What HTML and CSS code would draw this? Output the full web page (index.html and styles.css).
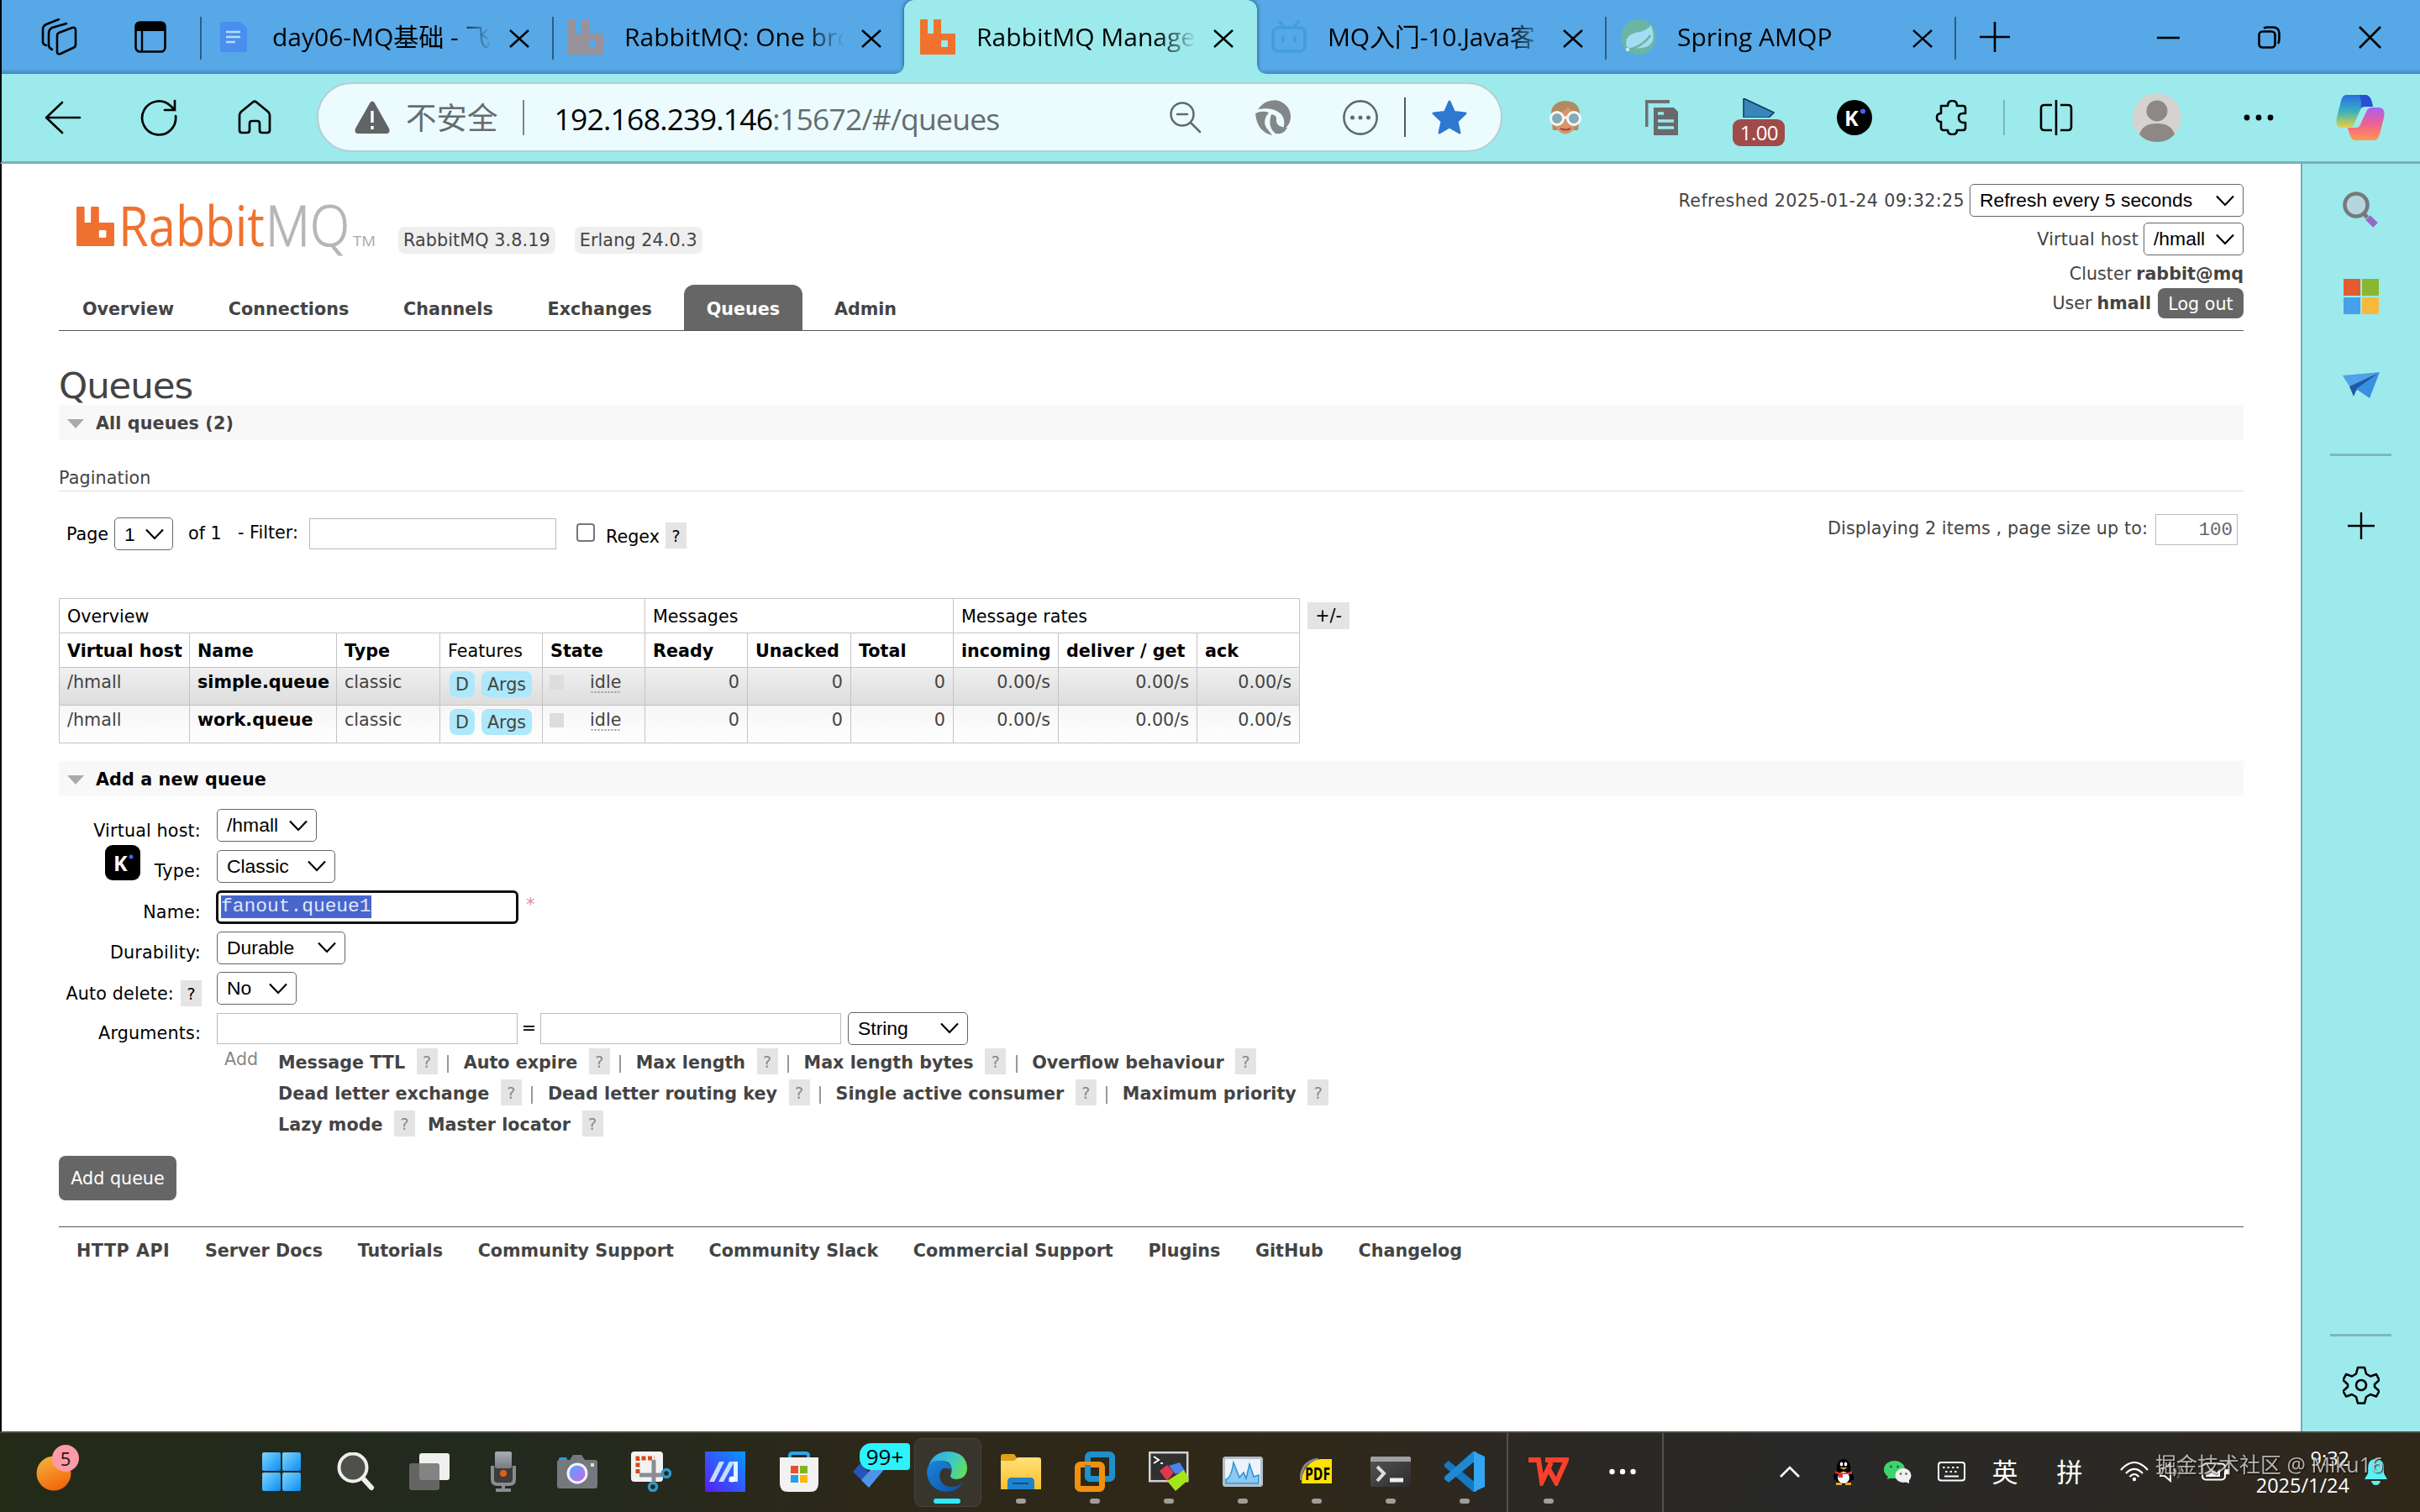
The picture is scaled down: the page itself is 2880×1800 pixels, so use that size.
FILE: index.html
```html
<!DOCTYPE html>
<html lang="zh-CN">
<head>
<meta charset="utf-8">
<title>RabbitMQ Management</title>
<link rel="stylesheet" href="styles.css">
</head>
<body>
<svg width="0" height="0" class="defs">
  <defs>
    <symbol id="x" viewBox="0 0 24 22"><path d="M1 1L23 21M23 1L1 21" fill="none" stroke="#000" stroke-width="2.4"/></symbol>
    <symbol id="chev" viewBox="0 0 22 14"><path d="M1 1.5L11 12L21 1.5" fill="none" stroke="#000" stroke-width="2.2"/></symbol>
    <symbol id="rabbit" viewBox="0 0 42 42"><path d="M1 0H8Q9 0 9 1V17H16V1Q16 0 17 0H24Q25 0 25 1V17H41Q42 17 42 18V41Q42 42 41 42H1Q0 42 0 41V1Q0 0 1 0ZM26 25Q25 25 25 26V32Q25 33 26 33H32Q33 33 33 32V26Q33 25 32 25Z" fill="currentColor" fill-rule="evenodd"/></symbol>
    <linearGradient id="gw" x1="0" y1="0" x2="1" y2="1"><stop offset="0" stop-color="#7fd6ff"/><stop offset="1" stop-color="#0a8cf0"/></linearGradient>
    <linearGradient id="go" x1="0" y1="0" x2=".4" y2="1"><stop offset="0" stop-color="#f4b93a"/><stop offset="1" stop-color="#f26a10"/></linearGradient>
    <linearGradient id="gf" x1="0" y1="0" x2="0" y2="1"><stop offset="0" stop-color="#ffe07a"/><stop offset="1" stop-color="#fbc02a"/></linearGradient>
    <linearGradient id="gma" x1="0" y1="1" x2="1" y2="0"><stop offset="0" stop-color="#5a1cf8"/><stop offset="1" stop-color="#0898ff"/></linearGradient>
    <linearGradient id="ge1" x1="0" y1=".3" x2="1" y2=".6"><stop offset="0" stop-color="#2ba8e8"/><stop offset=".55" stop-color="#3cc8c8"/><stop offset="1" stop-color="#62e05a"/></linearGradient>
    <linearGradient id="ge2" x1="0" y1="0" x2="1" y2="1"><stop offset="0" stop-color="#1b86dc"/><stop offset="1" stop-color="#0c4ea8"/></linearGradient>
    <linearGradient id="gl" x1="0" y1="0" x2="1" y2="1"><stop offset="0" stop-color="#58a8ff"/><stop offset="1" stop-color="#c468e8"/></linearGradient>
    <linearGradient id="gc1" x1="0" y1="0" x2="0" y2="1"><stop offset="0" stop-color="#2a6ee0"/><stop offset=".5" stop-color="#3ab0c0"/><stop offset="1" stop-color="#e8d040"/></linearGradient>
    <linearGradient id="gc2" x1="0" y1="0" x2="0" y2="1"><stop offset="0" stop-color="#a860f0"/><stop offset=".5" stop-color="#f06090"/><stop offset="1" stop-color="#ff9850"/></linearGradient>
    <linearGradient id="gm" x1="0" y1="0" x2="0" y2="1"><stop offset="0" stop-color="#a8acb4"/><stop offset="1" stop-color="#787c82"/></linearGradient>
    <linearGradient id="gt" x1="0" y1="0" x2="1" y2="1"><stop offset="0" stop-color="#555"/><stop offset="1" stop-color="#2c2c2c"/></linearGradient>
  </defs>
</svg>

<div class="window">
  <header class="tabstrip">
    <div class="strip-tools">
      <svg width="44" height="44" viewBox="0 0 44 44" fill="none" stroke="#000" stroke-width="2.6" stroke-linejoin="round" stroke-linecap="round"><path d="M20 20Q20 18 22 17L38 11Q42 10 42 14V31Q42 34 39 35L24 42Q20 43 20 40ZM10 33V18Q10 13 14 11L31 6M14 37Q10 35 10 32M3 29V13Q3 9 7 7L22 1M7 32Q3 31 3 28"/></svg>
      <svg class="tab-actions" width="38" height="38" viewBox="0 0 38 38"><rect x="1.5" y="1.5" width="35" height="35" rx="5" fill="none" stroke="#000" stroke-width="2.6"/><path d="M1 12V6Q1 1 6 1H32Q37 1 37 6V12Z"/><path d="M9 12V36" stroke="#000" stroke-width="2.4"/></svg>
    </div>
    <div class="tab sep">
      <svg width="36" height="38" viewBox="0 0 36 38"><path d="M2 4Q2 1 5 1H25L34 8V34Q34 37 31 37H5Q2 37 2 34Z" fill="#4a8ef0"/><path d="M9 13H26M9 19H26M9 25H20" stroke="#b4e0fb" stroke-width="2.6"/></svg>
      <span class="tab-title">day06-MQ基础 - 飞</span><svg class="close" width="24" height="22"><use href="#x"/></svg>
    </div>
    <div class="tab sep">
      <svg class="fav-muted" width="42" height="42"><use href="#rabbit"/></svg>
      <span class="tab-title">RabbitMQ: One bro</span><svg class="close" width="24" height="22"><use href="#x"/></svg>
    </div>
    <div class="tab active">
      <svg class="fav-orange" width="42" height="42"><use href="#rabbit"/></svg>
      <span class="tab-title">RabbitMQ Manage</span><svg class="close" width="24" height="22"><use href="#x"/></svg>
    </div>
    <div class="tab">
      <svg width="42" height="40" viewBox="0 0 42 40" fill="none" stroke="#429de0" stroke-width="3.6" stroke-linecap="round"><rect x="2" y="9" width="38" height="28" rx="6"/><path d="M10 2L15 8M32 2L27 8M14 20V25M28 20V25"/></svg>
      <span class="tab-title">MQ入门-10.Java客</span><svg class="close" width="24" height="22"><use href="#x"/></svg>
    </div>
    <div class="tab sep last">
      <svg width="42" height="42" viewBox="0 0 42 42"><circle cx="21" cy="21" r="21" fill="#6ab5a4"/><path d="M36 7Q45 32 24 34Q14 36 7 33Q3 20 17 16Q31 14 36 7Z" fill="#a4dcf2"/><path d="M5 37Q26 33 35 19" fill="none" stroke="#6ab5a4" stroke-width="2.4"/><circle cx="8" cy="36" r="2.2" fill="#c8ecf0"/></svg>
      <span class="tab-title">Spring AMQP</span><svg class="close" width="24" height="22"><use href="#x"/></svg>
    </div>
    <svg class="newtab" width="36" height="36" viewBox="0 0 36 36"><path d="M18 0V36M0 18H36" stroke="#000" stroke-width="2.6"/></svg>
    <div class="win-buttons">
      <svg width="27" height="27" viewBox="0 0 27 27"><path d="M0 14H27" stroke="#000" stroke-width="2.6"/></svg>
      <svg width="27" height="27" viewBox="0 0 27 27" fill="none" stroke="#000" stroke-width="2.6"><rect x="1.5" y="6.5" width="19" height="19" rx="4"/><path d="M7 2.5Q9 1.5 12 1.5H18Q25.500 1.500 25.500 9V15Q25.500 19 24 21"/></svg>
      <svg width="27" height="27" viewBox="0 0 27 27"><path d="M1 1L26 26M26 1L1 26" stroke="#000" stroke-width="2.6"/></svg>
    </div>
  </header>

  <div class="toolbar">
    <div class="slot"><svg width="44" height="40" viewBox="0 0 44 40" fill="none" stroke="#000" stroke-width="2.6" stroke-linecap="round"><path d="M42 20H2M21 2L2 20L21 38"/></svg></div>
    <div class="slot"><svg width="44" height="44" viewBox="0 0 44 44" fill="none" stroke="#000" stroke-width="2.7" stroke-linecap="round"><path d="M42 20A20 20 0 1 1 36 8L41 13M41 2V13H29"/></svg></div>
    <div class="slot"><svg width="40" height="42" viewBox="0 0 40 42" fill="none" stroke="#000" stroke-width="2.7" stroke-linejoin="round"><path d="M2 18Q2 16 4 14L18 2.500Q20 1 22 2.500L36 14Q38 16 38 18V36Q38 39 35 39H29Q26 39 26 36V28Q26 25 23 25H17Q14 25 14 28V36Q14 39 11 39H5Q2 39 2 36Z"/></svg></div>
    <div class="address">
      <svg width="42" height="40" viewBox="0 0 42 40"><path d="M18.500 2Q21 -1 23.500 2L41 33Q43 39 37 39H5Q-1 39 1 33Z" fill="#606464"/><path d="M21 12V26M21 30V34" stroke="#fff" stroke-width="3.4"/></svg>
      <span class="insecure">不安全</span>
      <span class="addr-sep"></span>
      <span class="url"><b>192.168.239.146</b>:15672/#/queues</span>
      <div class="addr-icons">
        <div class="islot"><svg width="38" height="38" viewBox="0 0 38 38" fill="none" stroke="#5e6b6c" stroke-width="2.5" stroke-linecap="round"><circle cx="15" cy="15" r="13.500"/><path d="M25 25L36 36M9 15H21"/></svg></div>
        <div class="islot"><svg width="42" height="42" viewBox="0 0 42 42" fill="#828788"><path d="M3 11Q12 -1 26 0.500Q42 5 42 21Q41 31 33 35Q37 22 29 15.500Q20 8 3 11Z"/><path d="M0 16Q8 12 16 15Q8 24 13 33L20 42Q2 38 0 16Z"/><path d="M19 17Q26 18 25 24Q24 32 38 33Q33 42 24 40Q14 32 19 17Z"/></svg></div>
        <div class="islot"><svg width="42" height="42" viewBox="0 0 42 42"><circle cx="21" cy="21" r="19.600" fill="none" stroke="#5e6b6c" stroke-width="2.600"/><g fill="#5e6b6c"><circle cx="11.500" cy="21" r="2.500"/><circle cx="21" cy="21" r="2.500"/><circle cx="30.500" cy="21" r="2.500"/></g></svg></div>
        <span class="star-sep"></span>
        <div class="islot"><svg width="42" height="41" viewBox="0 0 42 41"><path d="M21 2L26.500 14.500L40 16L30 25.500L33 39L21 32L9 39L12 25.500L2 16L15.500 14.500Z" fill="#2f78d0" stroke="#2f78d0" stroke-width="3" stroke-linejoin="round"/></svg></div>
      </div>
    </div>
    <div class="ext">
      <div class="slot"><svg width="42" height="40" viewBox="0 0 42 40"><path d="M4 18Q3 1 21 0Q39 1 38 18L36 35H6Z" fill="#b28a62"/><path d="M7 16Q20 14 24 7Q30 15 36 15L34 28Q30 39 21 39.500Q12 39 8 28Z" fill="#d8946c"/><g fill="#88a8b4" stroke="#f4f8f8" stroke-width="3"><circle cx="11" cy="21" r="7.500"/><circle cx="31" cy="21" r="7.500"/></g><path d="M17 20H25" stroke="#f4f8f8" stroke-width="3"/><path d="M15 33Q21 36 27 33" stroke="#a84838" stroke-width="2" fill="none"/></svg></div>
      <div class="slot"><svg width="40" height="42" viewBox="0 0 40 42"><path d="M1.500 32V2H29" fill="none" stroke="#6d7072" stroke-width="4"/><path d="M10 9H34L39 14V42H10Z" fill="#686a6c"/><path d="M15 16H22M15 25H34M15 33H34" stroke="#9ceaec" stroke-width="3.500"/></svg></div>
      <div class="slot flag"><svg width="38" height="23" viewBox="0 0 38 23"><path d="M1 0V23H31L37 17Z" fill="#3a86bc" stroke="#123c58" stroke-width="1.600"/></svg><span class="rate">1.00</span></div>
      <div class="slot"><svg width="42" height="42" viewBox="0 0 42 42"><circle cx="21" cy="21" r="21"/><text x="9" y="31" class="kmark">K</text><circle cx="31" cy="13.500" r="3" fill="#3c66f0"/></svg></div>
      <div class="slot"><svg width="38" height="42" viewBox="0 0 38 42" fill="none" stroke="#000" stroke-width="2.600" stroke-linejoin="round"><path d="M7 7H15Q15 1 20.500 1T26 7H33Q36 7 36 10V16H33Q28 16 28 21T33 27H36V33Q36 36 33 36H26Q26 41 20.500 41T15 36H10Q7 36 7 33V26Q2 26 2 21T7 16Z"/></svg></div>
    </div>
    <div class="ext wide">
      <div class="slot"><svg width="40" height="42" viewBox="0 0 40 42" fill="none" stroke="#000" stroke-width="2.600"><path d="M20 0V42M15 6H6Q2 6 2 10V32Q2 36 6 36H15M25 6H34Q38 6 38 10V32Q38 36 34 36H25"/></svg></div>
      <div class="slot"><svg width="58" height="58" viewBox="0 0 58 58"><circle cx="29" cy="29" r="29" fill="#d6d2cf"/><circle cx="29" cy="21" r="12.500" fill="#8d8886"/><path d="M8 49Q12 36 29 36T50 49Q42 58 29 58T8 49Z" fill="#8d8886"/></svg></div>
      <div class="slot"><svg width="36" height="8" viewBox="0 0 36 8"><circle cx="4" cy="4" r="3.400"/><circle cx="18" cy="4" r="3.400"/><circle cx="32" cy="4" r="3.400"/></svg></div>
      <div class="slot"><svg width="58" height="54" viewBox="0 0 58 54"><path d="M12 0H36Q42 1 44 14H34Q30 14 28 20L21 36Q19 39 14 39H6Q-1 38 1 27L6 7Q8 0 12 0Z" fill="url(#gc1)"/><path d="M46 54H22Q17 53 14 39H24Q28 39 30 33L37 18Q39 15 44 15H52Q59 16 57 27L52 47Q50 54 46 54Z" fill="url(#gc2)"/><path d="M27 0H36Q42 1 44 14H34Q30 14 29 16Q32 8 27 0Z" fill="#2850d0"/></svg></div>
    </div>
  </div>

  <div class="body">
    <main class="page">
      <div class="head">
        <div class="head-left">
          <div class="brand">
            <svg class="logo" width="360" height="66" viewBox="0 0 360 66">
              <svg x="0" y="8" width="45" height="47" viewBox="0 0 42 42" preserveAspectRatio="none" color="#f07030"><use href="#rabbit" width="42" height="42"/></svg>
              <text x="50" y="55" class="logo-r" textLength="174" lengthAdjust="spacingAndGlyphs">Rabbit</text>
              <text x="225" y="55" class="logo-mq" textLength="100" lengthAdjust="spacingAndGlyphs">MQ</text>
              <text x="329" y="55" class="logo-tm" textLength="27" lengthAdjust="spacingAndGlyphs">TM</text>
            </svg>
            <span class="ver">RabbitMQ 3.8.19</span><span class="ver">Erlang 24.0.3</span>
          </div>
          <nav class="nav"><a>Overview</a><a>Connections</a><a>Channels</a><a>Exchanges</a><a class="on">Queues</a><a>Admin</a></nav>
        </div>
        <div class="login">
          <div class="r1">Refreshed 2025-01-24 09:32:25 <span class="select w326">Refresh every 5 seconds<svg width="22" height="14"><use href="#chev"/></svg></span></div>
          <div class="r2">Virtual host <span class="select w119">/hmall<svg width="22" height="14"><use href="#chev"/></svg></span></div>
          <div class="r3">Cluster <b>rabbit@mq</b></div>
          <div class="r4">User <b>hmall</b> <span class="logout">Log out</span></div>
        </div>
      </div>
      <h1>Queues</h1>
      <h2 class="bar dim">All queues (2)</h2>
      <div class="pag">Pagination</div>
      <div class="filter">
        <span class="f-page">Page</span><span class="select w70">1<svg width="22" height="14"><use href="#chev"/></svg></span>
        <span class="f-of">of 1</span><span class="f-filter">- Filter:</span><span class="input f-input"></span>
        <span class="check"></span><span class="f-regex">Regex</span><span class="help f-help">?</span>
        <span class="f-disp">Displaying 2 items , page size up to:</span><span class="input f-size">100</span>
      </div>
      <div class="queues">
        <table>
          <colgroup><col class="c155"><col class="c175"><col class="c123"><col class="c122"><col class="c122"><col class="c122"><col class="c123"><col class="c122"><col class="c125"><col class="c165"><col class="c122"></colgroup>
          <tr class="g"><th colspan="5">Overview</th><th colspan="3">Messages</th><th colspan="3">Message rates</th></tr>
          <tr class="h"><th>Virtual host</th><th>Name</th><th>Type</th><th class="plain">Features</th><th>State</th><th>Ready</th><th>Unacked</th><th>Total</th><th>incoming</th><th>deliver / get</th><th>ack</th></tr>
          <tr class="alt1"><td>/hmall</td><td class="name">simple.queue</td><td>classic</td><td class="feat"><i>D</i><i>Args</i></td><td><span class="state"><u></u><span>idle</span></span></td><td class="n">0</td><td class="n">0</td><td class="n">0</td><td class="n">0.00/s</td><td class="n">0.00/s</td><td class="n">0.00/s</td></tr>
          <tr class="alt2"><td>/hmall</td><td class="name">work.queue</td><td>classic</td><td class="feat"><i>D</i><i>Args</i></td><td><span class="state"><u></u><span>idle</span></span></td><td class="n">0</td><td class="n">0</td><td class="n">0</td><td class="n">0.00/s</td><td class="n">0.00/s</td><td class="n">0.00/s</td></tr>
        </table>
        <span class="plusminus">+/-</span>
      </div>
      <h2 class="bar">Add a new queue</h2>
      <form class="form">
        <label>Virtual host:</label><div class="ctl"><span class="select w119">/hmall<svg width="22" height="14"><use href="#chev"/></svg></span></div>
        <label class="type"><svg width="42" height="42" viewBox="0 0 42 42"><rect width="42" height="42" rx="9"/><text x="10" y="31" class="kmark">K</text><circle cx="31" cy="14" r="2.500" fill="#3c66f0"/></svg>Type:</label><div class="ctl"><span class="select w141">Classic<svg width="22" height="14"><use href="#chev"/></svg></span></div>
        <label>Name:</label><div class="ctl"><span class="focus"><mark>fanout.queue1</mark></span><span class="mand">*</span></div>
        <label>Durability:</label><div class="ctl"><span class="select w153">Durable<svg width="22" height="14"><use href="#chev"/></svg></span></div>
        <label>Auto delete: <span class="help">?</span></label><div class="ctl"><span class="select w95">No<svg width="22" height="14"><use href="#chev"/></svg></span></div>
        <label class="lab-args">Arguments:</label><div class="ctl args"><span class="input"></span><span class="eq">=</span><span class="input"></span><span class="select w143">String<svg width="22" height="14"><use href="#chev"/></svg></span></div>
      </form>
      <div class="hints">
        <span class="add">Add</span>
        <div class="hint-rows">
          <div class="hint"><b>Message TTL</b><span class="help">?</span><s></s><b>Auto expire</b><span class="help">?</span><s></s><b>Max length</b><span class="help">?</span><s></s><b>Max length bytes</b><span class="help">?</span><s></s><b>Overflow behaviour</b><span class="help">?</span></div>
          <div class="hint"><b>Dead letter exchange</b><span class="help">?</span><s></s><b>Dead letter routing key</b><span class="help">?</span><s></s><b>Single active consumer</b><span class="help">?</span><s></s><b>Maximum priority</b><span class="help">?</span></div>
          <div class="hint"><b>Lazy mode</b><span class="help">?</span><b class="after">Master locator</b><span class="help">?</span></div>
        </div>
      </div>
      <span class="submit">Add queue</span>
      <footer><a class="http">HTTP API</a><a>Server Docs</a><a>Tutorials</a><a>Community Support</a><a>Community Slack</a><a>Commercial Support</a><a>Plugins</a><a>GitHub</a><a>Changelog</a></footer>
    </main>
    <aside class="side">
      <svg width="44" height="43" viewBox="0 0 44 43"><circle cx="16" cy="16" r="13.500" fill="#b4d6de" stroke="#77797c" stroke-width="4.500"/><path d="M26 27L29 31" stroke="#77797c" stroke-width="5"/><path d="M30 31L39 40" stroke="#9468c8" stroke-width="8"/></svg>
      <svg class="s2" width="42" height="42" viewBox="0 0 42 42"><path d="M0 0H20V20H0Z" fill="#e25c30"/><path d="M22 0H42V20H22Z" fill="#88b832"/><path d="M0 22H20V42H0Z" fill="#48a0ea"/><path d="M22 22H42V42H22Z" fill="#f6b93c"/></svg>
      <svg class="s3" width="44" height="32" viewBox="0 0 44 32"><path d="M0 4L44 0L8 17Z" fill="#4fa2e8"/><path d="M8 17L44 0L16 22L13 29Z" fill="#1c5ba4"/><path d="M16 20L44 0L32 31Z" fill="#3c8ee0"/></svg>
      <span class="s-line"></span>
      <svg class="s4" width="32" height="32" viewBox="0 0 32 32"><path d="M16 0V32M0 16H32" stroke="#000" stroke-width="2.400"/></svg>
      <span class="s-line low"></span>
      <svg class="s5" width="44" height="46" viewBox="0 0 44 46" fill="none" stroke="#000" stroke-width="2.600" stroke-linejoin="round"><path d="M18 2H26L28 9.500L33 12.500L40 10L43.500 17L38 22V25L43.500 30L40 36.500L33 34L28 37L26 44.500H18L16 37L11 34L4 36.500L.500 30L6 25V22L.500 17L4 10L11 12.500L16 9.500Z"/><circle cx="22" cy="23" r="6"/></svg>
    </aside>
  </div>

  <div class="taskbar">
    <div class="weather"><svg width="42" height="42" viewBox="0 0 42 42"><circle cx="21" cy="21" r="20.500" fill="url(#go)"/></svg><span class="pill5">5</span></div>
    <div class="apps">
      <div class="app"><svg width="46" height="46" viewBox="0 0 46 46" fill="url(#gw)"><rect width="22" height="22" rx="2"/><rect x="24" width="22" height="22" rx="2"/><rect y="24" width="22" height="22" rx="2"/><rect x="24" y="24" width="22" height="22" rx="2"/></svg></div>
      <div class="app"><svg width="46" height="46" viewBox="0 0 46 46"><circle cx="20" cy="18" r="16.500" fill="#50504a" stroke="#eee" stroke-width="4"/><path d="M32 31L42 42" stroke="#eee" stroke-width="6" stroke-linecap="round"/></svg></div>
      <div class="app"><svg width="48" height="44" viewBox="0 0 48 44"><rect x="12" width="36" height="32" rx="3" fill="#f0f0ee"/><rect y="12" width="36" height="32" rx="3" fill="#707070" fill-opacity=".85"/></svg></div>
      <div class="app"><svg width="30" height="48" viewBox="0 0 30 48"><path d="M2 17V33Q2 39 8 39H22Q28 39 28 33V17" fill="#3c3c3e" stroke="#8a8d90" stroke-width="4"/><rect x="5" width="20" height="20" rx="2" fill="url(#gm)"/><circle cx="15" cy="26" r="4" fill="#e06018"/><path d="M13 40H17V44H24V48H6V44H13Z" fill="#8a8d90"/></svg></div>
      <div class="app"><svg width="48" height="40" viewBox="0 0 48 40"><rect x="2" y="3" width="10" height="10" rx="2" fill="#2b9be0"/><path d="M3 6H15L19 0H29L33 6H45Q48 6 48 9V37Q48 40 45 40H3Q0 40 0 37V9Q0 6 3 6Z" fill="#75797e"/><circle cx="24" cy="22" r="12.500" fill="#f2f4f6"/><circle cx="24" cy="22" r="9.500" fill="url(#gl)"/><rect x="40" y="10" width="4" height="4" fill="#ddd"/></svg></div>
      <div class="app"><svg width="48" height="48" viewBox="0 0 48 48"><rect width="38" height="36" rx="4" fill="#f2f2f2"/><path d="M8 26V8H28" fill="none" stroke="#d24a16" stroke-width="5" stroke-dasharray="5 2.500"/><path d="M27 10V36M10 28H38" stroke="#888e94" stroke-width="5"/><g fill="none" stroke="#2e98cc" stroke-width="3.500"><circle cx="42" cy="26" r="4.500"/><circle cx="26" cy="42" r="4.500"/></g></svg></div>
      <div class="app"><svg width="48" height="48" viewBox="0 0 48 48"><rect width="48" height="48" fill="url(#gma)"/><path d="M5 36L17 12H23L11 36ZM16 36L29 12H35L22 36Z" fill="#c4dcff"/><path d="M34 12H39V36H28L31 30H34Z" fill="#e4f0ff"/><circle cx="32" cy="33" r="3.500" fill="#fff"/></svg></div>
      <div class="app"><svg width="46" height="48" viewBox="0 0 46 48"><path d="M12 9V5Q12 2 15 2H31Q34 2 34 5V9" fill="none" stroke="#2ba6ec" stroke-width="4"/><path d="M0 7H46V38Q46 48 36 48H10Q0 48 0 38Z" fill="#f2f2f2"/><path d="M13 17H22V26H13Z" fill="#e84f2c"/><path d="M24 17H33V26H24Z" fill="#80b81c"/><path d="M13 28H22V37H13Z" fill="#22a0ea"/><path d="M24 28H33V37H24Z" fill="#fbb810"/></svg></div>
      <div class="app"><svg width="48" height="48" viewBox="0 0 48 48"><path d="M0 24L9 14L26 33L19 43Z" fill="#2456b8"/><path d="M10 34L30 12L40 18L19 43Z" fill="#4c96ea"/></svg><span class="pill99">99+</span></div>
      <div class="app edge"><svg width="48" height="48" viewBox="0 0 48 48"><path d="M2 17Q8 0 26 0Q47 1 48 20Q47 33 34 33Q26 32 29 26Q32 12 18 11Q6 11 2 17Z" fill="url(#ge1)"/><path d="M0 25Q1 9 18 11Q29 13 30 22Q16 15 15 29Q17 43 31 42Q38 42 44 36Q37 48 23 48Q2 46 0 25Z" fill="url(#ge2)"/></svg></div>
      <div class="app run"><svg width="48" height="42" viewBox="0 0 48 42"><path d="M0 3Q0 0 3 0H16L20 6V12H0Z" fill="#e0a018"/><path d="M0 8H16L20 4H45Q48 4 48 7V42H0Z" fill="url(#gf)"/><path d="M8 42V33Q8 28 13 28H35Q40 28 40 33V42Z" fill="#1f83cc"/><path d="M14 35H33" stroke="#114f88" stroke-width="2"/></svg></div>
      <div class="app run"><svg width="48" height="48" viewBox="0 0 48 48" fill="none" stroke-width="7"><rect x="15.500" y="3.500" width="29" height="29" rx="3" stroke="#1e90cc"/><rect x="3.500" y="15.500" width="29" height="29" rx="3" stroke="#f09010"/><path d="M15.500 16V29Q15.500 32.500 19 32.500H28" stroke="#1e90cc"/></svg></div>
      <div class="app run"><svg width="48" height="48" viewBox="0 0 48 48"><rect x="1.200" y="1.200" width="45" height="34" fill="#303030" stroke="#d4d4d4" stroke-width="2.500"/><path d="M6 6L12 10L6 14M14 14H17" stroke="#fff" stroke-width="2" fill="none"/><path d="M13 23L22 16L30 25L22 35Z" fill="#e0384a"/><path d="M24 17L37 13L43 23L32 27Z" fill="#4c82ea"/><path d="M22 35L42 22L48 33L32 47Z" fill="#a4e818"/></svg></div>
      <div class="app run"><svg width="48" height="36" viewBox="0 0 48 36"><rect x="1.500" y="1.500" width="45" height="33" rx="2" fill="#ecf3fa" stroke="#b4c0cc" stroke-width="3"/><path d="M4 27Q10 26 13 7L20 25L25 19L28 26L32 9L37 24L43 22V32H4Z" fill="#8cc8f0" stroke="#2c90d4" stroke-width="1.500"/></svg></div>
      <div class="app run"><svg width="40" height="32" viewBox="0 0 40 32"><path d="M1 26Q1 4 22 1" fill="none" stroke="#888" stroke-width="3"/><path d="M2 30Q2 6 24 1L38 1V30Z" fill="#ffe200"/><text x="6" y="26" class="pdfmark" textLength="30" lengthAdjust="spacingAndGlyphs">PDF</text></svg></div>
      <div class="app run"><svg width="48" height="36" viewBox="0 0 48 36"><rect width="48" height="36" rx="2" fill="url(#gt)"/><path d="M0 6V2Q0 0 2 0H46Q48 0 48 2V6Z" fill="#a0a0a0"/><path d="M8 12L16 20L8 29" stroke="#ddd" stroke-width="4" fill="none"/><path d="M23 28H39" stroke="#eee" stroke-width="5"/></svg></div>
      <div class="app run"><svg width="48" height="48" viewBox="0 0 48 48"><path d="M0 15L5 11L38 38V48H34L0 18Z" fill="#1678c2"/><path d="M0 33L5 37L38 10V0H34L0 30Z" fill="#1f88d2"/><path d="M35 0L48 6V42L35 48Z" fill="#32a6f0"/></svg></div>
      <span class="tb-sep"></span>
      <div class="app run"><svg width="48" height="34" viewBox="0 0 48 34" fill="none" stroke="#f8402c" stroke-width="6"><path d="M0 3H12L16 29L27 6"/><path d="M20 3H45L33 30L24 14"/></svg></div>
      <div class="app"><svg width="32" height="8" viewBox="0 0 32 8" fill="#fff"><circle cx="3.500" cy="4" r="3.200"/><circle cx="16" cy="4" r="3.200"/><circle cx="28.500" cy="4" r="3.200"/></svg></div>
      <span class="tb-sep two"></span>
    </div>
    <div class="tray">
      <div class="t"><svg width="24" height="14" viewBox="0 0 24 14"><path d="M1 13L12 2L23 13" stroke="#fff" stroke-width="2.600" fill="none"/></svg></div>
      <div class="t"><svg width="28" height="31" viewBox="0 0 28 31"><ellipse cx="14" cy="20" rx="11" ry="10"/><path d="M2 20L6 13V8Q8 0 14 0T22 8V13L26 20V25L2 24Z"/><ellipse cx="14" cy="22" rx="7" ry="7" fill="#fff"/><path d="M4 14Q14 19 24 14V18H13V22H8V18L4 17Z" fill="#e83030"/><ellipse cx="11.500" cy="6" rx="1.800" ry="2.500" fill="#fff"/><ellipse cx="16.500" cy="6" rx="1.800" ry="2.500" fill="#fff"/><path d="M9 10H19L14 12.500ZM5 28H12V31H5ZM16 28H23V31H16Z" fill="#f0a818"/></svg></div>
      <div class="t"><svg width="33" height="27" viewBox="0 0 33 27"><ellipse cx="12.500" cy="10.500" rx="12.500" ry="10.500" fill="#3cd46c"/><path d="M5 17L4 22L10 20Z" fill="#3cd46c"/><ellipse cx="23" cy="17.500" rx="9.500" ry="8.500" fill="#f0f0f0"/><path d="M25 25L30 27L30 22Z" fill="#f0f0f0"/><g fill="#1c7038"><circle cx="8.500" cy="7" r="1.500"/><circle cx="16.500" cy="7" r="1.500"/></g><g fill="#555"><circle cx="20" cy="15.500" r="1.300"/><circle cx="26.500" cy="15.500" r="1.300"/></g></svg></div>
      <div class="t"><svg width="33" height="24" viewBox="0 0 33 24" fill="none" stroke="#fff" stroke-width="2"><rect x="1" y="1" width="31" height="21.500" rx="3"/><path d="M6 7H27M9 12H25" stroke-dasharray="2.500 3"/><path d="M8 17.500H25"/></svg></div>
      <div class="t ime">英</div><div class="t ime pin">拼</div>
      <div class="t"><svg width="34" height="24" viewBox="0 0 34 24" fill="none" stroke="#fff" stroke-width="2.200"><path d="M1 10Q17 -8 33 10M7 14Q17 4 27 14M11.500 18Q17 12 22.500 18"/><circle cx="17" cy="21" r="2.200" fill="#fff" stroke="none"/></svg></div>
      <svg class="spk" width="30" height="25" viewBox="0 0 30 25" fill="none" stroke="#fff" stroke-width="2"><path d="M1 8H6L13 2V23L6 17H1ZM17 8Q21 12 17 17"/><path d="M21 5Q28 12 21 20" stroke="#666"/></svg>
      <svg class="bat" width="34" height="22" viewBox="0 0 34 22"><rect x="1" y="1.500" width="27" height="19" rx="4" fill="none" stroke="#fff" stroke-width="2.200"/><path d="M5 15L12 7L18 12L22 8V17H5Z" fill="#fff"/><path d="M31 8V14" stroke="#fff" stroke-width="4"/></svg>
      <div class="clock"><span>9:32</span><span>2025/1/24</span></div>
      <svg class="bell" width="27" height="31" viewBox="0 0 27 31" fill="#5cf0f6"><path d="M4 11Q4 0 13.500 0T23 11V17L27 24H0L4 17Z"/><path d="M8 26H19Q18 31 13.500 31T8 26Z"/></svg>
    </div>
    <span class="watermark">掘金技术社区 @ Miku16</span>
  </div>
</div>
</body>
</html>
```
FILE: styles.css
```css
* { box-sizing: border-box; }
body { margin: 0; background: #fff; font-family: "DejaVu Sans", "Noto Sans CJK SC", sans-serif; font-size: 20.7px; color: #444; }
svg { display: block; flex: none; }
.defs { position: absolute; }
.window { width: 2880px; height: 1800px; display: flex; flex-direction: column; overflow: hidden; }

/* tab strip */
.tabstrip { height: 88px; flex: none; display: flex; align-items: center; background: linear-gradient(#57a8e6 82px, #4288bc 88px); font-family: "Open Sans", "Noto Sans CJK SC", sans-serif; color: #000; border-left: 2px solid #000; }
.strip-tools { width: 236px; padding: 0 0 0 46px; display: flex; align-items: center; }
.tab-actions { margin-left: 68px; }
.tab { width: 419px; height: 88px; flex: none; display: flex; align-items: center; padding-left: 19px; position: relative; }
.sep::before { content: ""; position: absolute; left: 0; top: 20px; width: 2px; height: 51px; background: #2a5f88; }
.tab > svg:first-child { width: 42px; }
.tab > .fav-muted { color: #98929a; }
.tab > .fav-orange { color: #f0722e; }
.tab-title { width: 264px; margin-left: 25px; font-size: 30px; line-height: 50px; height: 50px; white-space: nowrap; -webkit-mask-image: linear-gradient(90deg, #000 215px, transparent 262px); mask-image: linear-gradient(90deg, #000 215px, transparent 262px); }
.close { margin: 4px 0 0 18px; }
.tab.active { width: 420px; background: #9ceaec; border-radius: 12px 12px 0 0; box-shadow: 0 0 5px #12466e; clip-path: inset(0 -12px 0 -12px); }
.tab.active::before, .tab.active::after { content: ""; position: absolute; bottom: 0; width: 10px; height: 10px; }
.tab.active::before { left: -10px; background: radial-gradient(circle at 0 0, transparent 9px, #9ceaec 10px); }
.tab.active::after { right: -10px; background: radial-gradient(circle at 10px 0, transparent 9px, #9ceaec 10px); }
.tab.active + .tab { width: 414px; padding-left: 17px; letter-spacing: -.15px; }
.tab.active + .tab .close { margin-left: 16px; }
.tab.last { width: 417px; }
.tab.last .close { margin-left: 16px; }
.newtab { margin-left: 29px; }
.tab.last::after { content: ""; position: absolute; right: -1px; top: 20px; width: 2px; height: 51px; background: #2a5f88; }
.win-buttons { display: flex; gap: 93px; margin-left: auto; padding-right: 46px; }

/* toolbar */
.toolbar { height: 107px; flex: none; display: flex; align-items: center; padding: 0 0 1px 16px; background: #9ceaec; border-left: 2px solid #000; border-bottom: 3px solid #7db0b6; }
.slot { width: 114px; display: flex; justify-content: center; }
.address { width: 1411px; height: 83px; margin-left: 17px; border: 2px solid #b9cdd2; border-radius: 42px; background: #ecfcfe; display: flex; align-items: center; padding-left: 43px; font-family: "Open Sans", "Noto Sans CJK SC", sans-serif; font-size: 35px; color: #666c6e; white-space: nowrap; }
.insecure { margin-left: 19px; font-size: 36.500px; line-height: 50px; }
.addr-sep { width: 2px; height: 42px; background: #7a8688; margin-left: 29px; }
.url { margin-left: 36px; font-size: 35.500px; letter-spacing: -.78px; padding-top: 2px; }
.url b { color: #000; font-weight: 400; }
.addr-icons { margin-left: auto; display: flex; align-items: center; padding-right: 9px; }
.islot { width: 104px; display: flex; justify-content: center; }
.star-sep { width: 2px; height: 47px; background: #4c5c5e; }
.ext { display: flex; align-items: center; margin-left: 18px; }
.ext .slot { width: 114.700px; }
.flag { position: relative; height: 64px; align-items: flex-start; padding-top: 9px; }
.rate { position: absolute; left: 27px; top: 34px; width: 62px; height: 32px; border-radius: 9px; background: #a04a4a; color: #fff; font: 24px/32px "Open Sans", sans-serif; text-align: center; letter-spacing: -.6px; }
.kmark { font: 700 25px "Open Sans", sans-serif; fill: #fff; }
.pdfmark { font: 700 22px "Open Sans", sans-serif; fill: #000; }
.ext.wide { margin-left: 5px; border-left: 2px solid #80b4b8; height: 42px; }
.wide .slot { width: 120.700px; }

/* content */
.body { flex: none; height: 1509px; display: flex; }
.page { flex: none; width: 2738px; padding-left: 68px; background: #fff; border-left: 2px solid #000; }
.side { flex: 1; background: #9ceaec; border-left: 2px solid #78acb2; display: flex; flex-direction: column; align-items: center; padding: 33px 1px 0 0; }
.s2 { margin-top: 61px; }
.s3 { margin-top: 69px; }
.s-line { width: 73px; height: 3px; background: #7cb8be; margin-top: 65px; }
.s4 { margin-top: 67px; }
.s-line.low { margin-top: 946px; }
.s5 { margin-top: 35px; }

.head { width: 2600px; height: 199px; border-bottom: 1px solid #555; display: flex; justify-content: space-between; }
.head-left { display: flex; flex-direction: column; justify-content: space-between; }
.brand { display: flex; align-items: flex-end; padding: 43px 0 0 21px; }
.logo { overflow: visible; }
.logo-r, .logo-mq { font: 66px "Open Sans", sans-serif; fill: #f0722e; }
.logo-mq { font-weight: 300; fill: #b6b6b6; stroke: #b6b6b6; stroke-width: 1.200px; }
.logo-tm { font: 16px "Open Sans", sans-serif; fill: #aaa; }
.ver { height: 32px; line-height: 33px; padding: 0 6px; border-radius: 7px; background: #efefef; margin: 0 0 2px 23px; letter-spacing: .1px; white-space: nowrap; }
.nav { display: flex; gap: 10.800px; padding-left: 1px; }
.nav a { height: 54px; line-height: 58px; padding: 0 27px; border-radius: 12px 12px 0 0; font-weight: 700; }
.nav .on { background: #666; color: #fff; }
.login { display: flex; flex-direction: column; align-items: flex-end; padding-top: 24px; white-space: nowrap; }
.login > div { display: flex; align-items: center; gap: 6px; }
.r1 { height: 39px; letter-spacing: .35px; }
.login .r2 { height: 39px; margin-top: 7px; letter-spacing: .15px; }
.r3 { height: 30px; margin-top: 7px; }
.login .r4 { height: 36px; margin-top: 2px; }
.r4 .logout { margin-left: 2px; }
.logout { width: 102px; height: 36px; border-radius: 8px; background: #666; color: #fff; line-height: 38px; text-align: center; }
.select { display: inline-flex; flex: none; align-items: center; justify-content: space-between; height: 39px; padding: 0 10px 0 11px; border: 1px solid #666; border-radius: 5px; background: #fff; font-family: "Liberation Sans", Arial, sans-serif; font-size: 22.900px; letter-spacing: 0; color: #000; white-space: nowrap; }
.w326 { width: 326px; } .w119 { width: 119px; } .w70 { width: 70px; } .w141 { width: 141px; } .w153 { width: 153px; } .w95 { width: 95px; } .w143 { width: 143px; }

h1 { margin: 0; height: 88px; padding-top: 37px; font-size: 43.500px; line-height: 56px; font-weight: 400; letter-spacing: -1.100px; }
.bar { margin: 0; width: 2600px; height: 42px; line-height: 44px; background: #f8f8f8; font-size: 20.700px; font-weight: 700; color: #000; display: flex; align-items: center; padding-top: 1px; letter-spacing: .1px; }
.bar::before { content: ""; border: 10px solid transparent; border-top: 11px solid #aaa; border-bottom: 0; margin: 1px 14px 0 10px; }
.bar.dim { color: #444; }
.pag { width: 2600px; height: 61px; padding-top: 30px; line-height: 30px; border-bottom: 1px solid #ddd; letter-spacing: .1px; }
.filter { width: 2600px; height: 127px; display: flex; align-items: flex-start; padding: 31px 7px 0 9px; color: #000; white-space: nowrap; line-height: 30px; }
.input { border: 1px solid #bbb; background: #fff; height: 37px; }
.f-page { width: 57px; padding-top: 5px; }
.f-of { width: 59px; margin-left: 18px; padding-top: 4px; }
.f-filter { width: 85px; padding-top: 3px; }
.f-input { width: 294px; margin-top: 1px; }
.check { width: 22px; height: 22px; border: 2px solid #767676; border-radius: 4px; margin: 7px 0 0 24px; }
.f-regex { width: 71px; margin-left: 13px; padding-top: 8px; }
.help { display: inline-block; width: 25px; height: 31px; line-height: 32px; background: #e4e4e4; text-align: center; font-size: 19px; flex: none; }
.f-help { margin-top: 6px; }
.f-disp { margin: -2px 9px 0 auto; color: #444; letter-spacing: .1px; }
.f-size { width: 98px; margin-top: -4px; font: 22.500px/37px "Liberation Mono", monospace; color: #666; text-align: right; padding-right: 5px; }

.queues { display: flex; align-items: flex-start; height: 194px; }
table { border-collapse: collapse; table-layout: fixed; width: 1477px; color: #444; }
.c155 { width: 155px; } .c175 { width: 175px; } .c123 { width: 123px; } .c122 { width: 122px; } .c125 { width: 125px; } .c165 { width: 165px; }
th, td { border: 1px solid #c4c4c4; padding: 0 9px; text-align: left; white-space: nowrap; vertical-align: top; line-height: 35px; }
th { color: #000; vertical-align: middle; line-height: 30px; padding-top: 2px; padding-right: 4px; }
.g { height: 41px; } .h { height: 41px; }
.g th, .plain { font-weight: 400; }
.alt1, .alt2 { height: 45px; }
.alt1 { background: linear-gradient(#f0f0f0, #dcdcdc); }
.alt2 { background: linear-gradient(#f6f6f6, #fff); }
.name { font-weight: 700; color: #000; }
.n { text-align: right; }
td.name { padding-right: 4px; }
.feat { padding-right: 0; }
.feat i { display: inline-block; font-style: normal; height: 31px; line-height: 33px; padding: 0 7px; margin: 4px 8px 0 2px; border-radius: 8px; background: #ade8fb; vertical-align: top; }
.feat i + i { margin: 4px 0 0; }
.state { display: flex; }
.state u { width: 17px; height: 17px; background: #ddd; margin: 9px 31px 0 -1px; }
.state span { line-height: 26px; height: 30px; padding-top: 4px; border-bottom: 2px dotted #999; border-radius: 4px; }
.plusminus { width: 50px; height: 32px; line-height: 32px; margin: 5px 0 0 9px; background: #e4e4e4; color: #000; text-align: center; }

.form { margin: 0; padding-top: 10px; display: grid; grid-template-columns: 170px 1fr; grid-template-rows: repeat(5, 48.500px) 44px; column-gap: 18px; color: #000; }
label { display: flex; justify-content: flex-end; align-items: center; padding-top: 13px; white-space: nowrap; line-height: 30px; letter-spacing: .15px; }
label:not(:has(.help)) { padding-right: 1px; }
label .help { margin-left: 8px; }
.lab-args { padding-top: 15px; }
.type { gap: 17px; }
.type svg { margin-top: -20px; }
.ctl { display: flex; align-items: center; padding-top: 1px; }
.focus { width: 360px; height: 40px; margin-left: -1px; border: 3px solid #101010; border-radius: 6px; padding-left: 3px; display: flex; align-items: center; }
mark { background: #4866cc; color: #dfe8fa; font: 22.900px/27px "Liberation Mono", monospace; height: 27px; }
.mand { color: #e09098; font-size: 21px; margin: -5px 0 0 9px; }
.ctl.args { padding-top: 3px; }
.args .input { width: 358px; }
.eq { width: 27px; text-align: center; }
.args .select { margin-left: 8px; }
.hints { display: flex; height: 131px; padding-left: 197px; }
.add { width: 64px; color: #888; line-height: 32px; letter-spacing: .1px; }
.hint { display: flex; align-items: center; height: 37px; white-space: nowrap; color: #888; }
.hint b { color: #444; padding-top: 4px; }
.hint .help { margin-left: 13.500px; }
.hint s { width: 2px; height: 21px; background: #999; margin: 6px 17.500px 0 11.500px; }
.hint .after { margin-left: 15px; }
.submit { display: block; width: 140px; height: 53px; line-height: 55px; border-radius: 8px; background: #666; color: #fff; text-align: center; }
footer { margin-top: 31px; width: 2600px; border-top: 1px solid #555; padding: 13px 21px 0; display: flex; gap: 41.700px; font-weight: 700; line-height: 30px; }
.http { letter-spacing: .5px; }

/* taskbar */
.taskbar { height: 96px; flex: none; position: relative; display: flex; align-items: center; border-top: 2px solid #4c4c46; background: linear-gradient(90deg, #242a18, #222a1e 20%, #2c281a 36%, #302818 52%, #2c2822 62%, #292929 75%, #2b2924 88%, #302719); font-family: "Open Sans", "Noto Sans CJK SC", sans-serif; color: #fff; }
.weather { width: 290px; flex: none; padding: 2px 0 0 43px; position: relative; }
.pill5 { position: absolute; left: 62px; top: -11px; width: 32px; height: 32px; border-radius: 16px; background: #ff9aa8; color: #201418; font-size: 22px; line-height: 32px; text-align: center; }
.apps { display: flex; align-items: center; height: 94px; padding-left: 1px; flex: none; }
.app { width: 88px; height: 94px; flex: none; display: flex; align-items: center; justify-content: center; position: relative; padding-bottom: 2px; }
.run::after { content: ""; position: absolute; left: 38px; bottom: 10px; width: 12px; height: 6px; border-radius: 3px; background: #a09e98; }
.edge::before { content: ""; position: absolute; left: 5px; top: 6px; width: 78px; height: 80px; border-radius: 9px; background: #38362c; border: 1px solid #45433a; }
.edge svg { position: relative; }
.edge::after { content: ""; position: absolute; left: 28px; bottom: 10px; width: 32px; height: 6px; border-radius: 3px; background: #30e8fc; }
.pill99 { position: absolute; left: 28px; top: 12px; width: 60px; height: 32px; border-radius: 14px 4px 4px 14px; background: #2cf2fc; color: #000; font-size: 26px; line-height: 32px; text-align: center; z-index: 1; }
.tb-sep { width: 2px; height: 94px; background: #555048; margin: 0 4px 0 6px; }
.tb-sep.two { margin-left: 3px; }
.tray { display: flex; align-items: center; height: 94px; margin-left: auto; width: 782px; white-space: nowrap; padding-bottom: 2px; }
.t { width: 64px; display: flex; justify-content: center; flex: none; }
.ime { font-size: 31px; line-height: 40px; }
.pin { width: 90px; }
.spk { margin-left: -2px; }
.bat { margin-left: 20px; }
.clock { width: 142px; display: flex; flex-direction: column; align-items: flex-end; font-size: 23.500px; line-height: 32px; letter-spacing: 0; }
.bell { margin-left: 18px; }
.watermark { position: absolute; left: 2565px; top: 19px; font-size: 25px; line-height: 36px; color: #d0ccc8; opacity: .85; white-space: nowrap; text-shadow: 1px 1px 2px #000; }
```
